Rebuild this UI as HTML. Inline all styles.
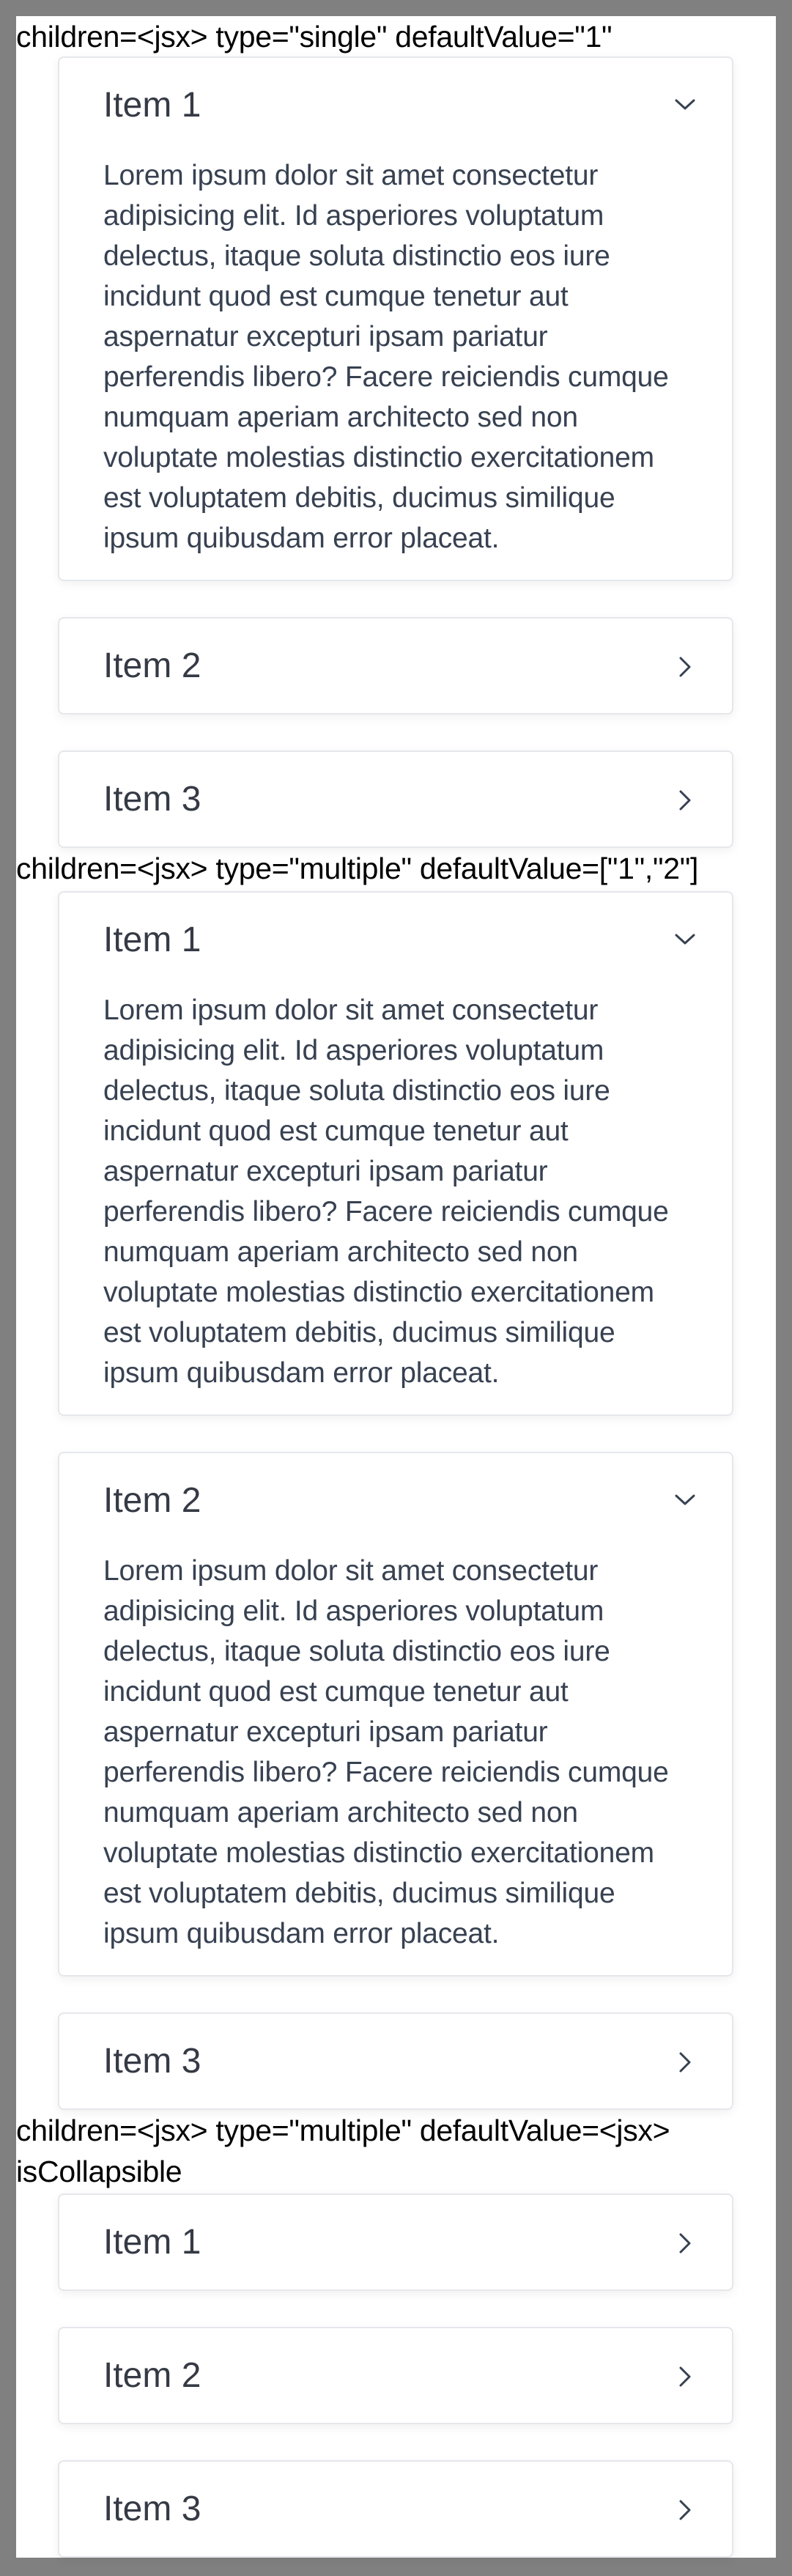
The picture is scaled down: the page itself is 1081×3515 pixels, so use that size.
<!DOCTYPE html>
<html><head><meta charset="utf-8">
<style>
*{box-sizing:border-box;margin:0;padding:0}
html,body{width:1081px;height:3515px;background:#808080;overflow:hidden}
.wrap{position:absolute;left:22px;top:22px;width:1037px;height:3468px;background:#fff;font-family:"Liberation Sans",sans-serif}
.h{font-size:41px;line-height:56px;color:#000;white-space:nowrap;letter-spacing:-0.3px}
.h1{height:55px}
.h2{height:59px}
.h3{height:114px}
.card{margin-left:57px;width:922px;border:2px solid #e5e7eb;border-radius:8px;background:#fff;box-shadow:0 4px 14px rgba(0,0,0,0.06)}
.card+.card{margin-top:49px}
.hd{position:relative;height:129px;line-height:129px;padding-left:60px;font-size:48px;color:#353a45}
.hd svg{position:absolute;right:49px;top:50%}
.bd{padding:4px 0 29px 60px;font-size:39px;line-height:55px;color:#374151;white-space:nowrap;letter-spacing:-0.2px}
</style></head><body>
<div class="wrap">
<div class="h h1">children=&lt;jsx&gt; type="single" defaultValue="1"</div>
<div class="card"><div class="hd">Item 1<svg width="30" height="20" viewBox="0 0 30 20" style="margin-top:-11px"><path d="M3 4 L15 15 L27 4" fill="none" stroke="#374151" stroke-width="3" stroke-linecap="round" stroke-linejoin="round"/></svg></div>
<div class="bd">Lorem ipsum dolor sit amet consectetur<br>adipisicing elit. Id asperiores voluptatum<br>delectus, itaque soluta distinctio eos iure<br>incidunt quod est cumque tenetur aut<br>aspernatur excepturi ipsam pariatur<br>perferendis libero? Facere reiciendis cumque<br>numquam aperiam architecto sed non<br>voluptate molestias distinctio exercitationem<br>est voluptatem debitis, ducimus similique<br>ipsum quibusdam error placeat.</div></div>
<div class="card"><div class="hd">Item 2<svg width="20" height="30" viewBox="0 0 20 30" style="margin-top:-14px;right:54px"><path d="M4 3 L16 15 L4 27" fill="none" stroke="#374151" stroke-width="3" stroke-linecap="round" stroke-linejoin="round"/></svg></div></div>
<div class="card"><div class="hd">Item 3<svg width="20" height="30" viewBox="0 0 20 30" style="margin-top:-14px;right:54px"><path d="M4 3 L16 15 L4 27" fill="none" stroke="#374151" stroke-width="3" stroke-linecap="round" stroke-linejoin="round"/></svg></div></div>

<div class="h h2">children=&lt;jsx&gt; type="multiple" defaultValue=["1","2"]</div>
<div class="card"><div class="hd">Item 1<svg width="30" height="20" viewBox="0 0 30 20" style="margin-top:-11px"><path d="M3 4 L15 15 L27 4" fill="none" stroke="#374151" stroke-width="3" stroke-linecap="round" stroke-linejoin="round"/></svg></div>
<div class="bd">Lorem ipsum dolor sit amet consectetur<br>adipisicing elit. Id asperiores voluptatum<br>delectus, itaque soluta distinctio eos iure<br>incidunt quod est cumque tenetur aut<br>aspernatur excepturi ipsam pariatur<br>perferendis libero? Facere reiciendis cumque<br>numquam aperiam architecto sed non<br>voluptate molestias distinctio exercitationem<br>est voluptatem debitis, ducimus similique<br>ipsum quibusdam error placeat.</div></div>
<div class="card"><div class="hd">Item 2<svg width="30" height="20" viewBox="0 0 30 20" style="margin-top:-11px"><path d="M3 4 L15 15 L27 4" fill="none" stroke="#374151" stroke-width="3" stroke-linecap="round" stroke-linejoin="round"/></svg></div>
<div class="bd">Lorem ipsum dolor sit amet consectetur<br>adipisicing elit. Id asperiores voluptatum<br>delectus, itaque soluta distinctio eos iure<br>incidunt quod est cumque tenetur aut<br>aspernatur excepturi ipsam pariatur<br>perferendis libero? Facere reiciendis cumque<br>numquam aperiam architecto sed non<br>voluptate molestias distinctio exercitationem<br>est voluptatem debitis, ducimus similique<br>ipsum quibusdam error placeat.</div></div>
<div class="card"><div class="hd">Item 3<svg width="20" height="30" viewBox="0 0 20 30" style="margin-top:-14px;right:54px"><path d="M4 3 L16 15 L4 27" fill="none" stroke="#374151" stroke-width="3" stroke-linecap="round" stroke-linejoin="round"/></svg></div></div>

<div class="h h3">children=&lt;jsx&gt; type="multiple" defaultValue=&lt;jsx&gt;<br>isCollapsible</div>
<div class="card"><div class="hd">Item 1<svg width="20" height="30" viewBox="0 0 20 30" style="margin-top:-14px;right:54px"><path d="M4 3 L16 15 L4 27" fill="none" stroke="#374151" stroke-width="3" stroke-linecap="round" stroke-linejoin="round"/></svg></div></div>
<div class="card"><div class="hd">Item 2<svg width="20" height="30" viewBox="0 0 20 30" style="margin-top:-14px;right:54px"><path d="M4 3 L16 15 L4 27" fill="none" stroke="#374151" stroke-width="3" stroke-linecap="round" stroke-linejoin="round"/></svg></div></div>
<div class="card"><div class="hd">Item 3<svg width="20" height="30" viewBox="0 0 20 30" style="margin-top:-14px;right:54px"><path d="M4 3 L16 15 L4 27" fill="none" stroke="#374151" stroke-width="3" stroke-linecap="round" stroke-linejoin="round"/></svg></div></div>
</div>
</body></html>
